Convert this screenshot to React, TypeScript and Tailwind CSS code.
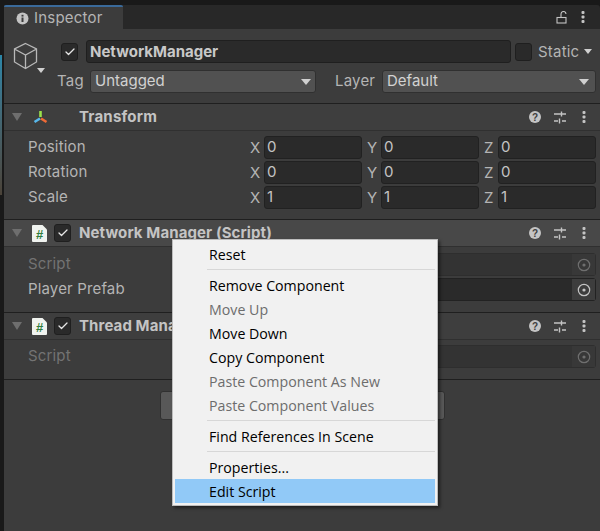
import { Check } from "lucide-react";

const font = "font-['Inter','Noto_Sans',sans-serif]";

function Dots() {
    return (
        <svg width="4" height="14" viewBox="0 0 4 14" className="block">
            <rect x="0.5" y="1" width="3" height="3" rx="1" fill="#c4c4c4" />
            <rect x="0.5" y="5.5" width="3" height="3" rx="1" fill="#c4c4c4" />
            <rect x="0.5" y="10" width="3" height="3" rx="1" fill="#c4c4c4" />
        </svg>
    );
}

function HeaderIcons() {
    return (
        <div className="ml-auto flex items-center">
            <svg width="14" height="14" viewBox="0 0 14 14" className="block">
                <circle cx="7" cy="7" r="6" fill="#c4c4c4" />
                <text x="7" y="10.5" textAnchor="middle" fontSize="10" fontWeight="700" fontFamily="Liberation Sans" fill="#3e3e3e">?</text>
            </svg>
            <svg width="14" height="14" viewBox="0 0 14 14" className="ml-[11px] block">
                <path d="M1 4h12M1 11h4M9 11h4M8.5 1.5v5M6.5 8.5v5" stroke="#c4c4c4" strokeWidth="1.4" fill="none" />
            </svg>
            <div className="mr-[14px] ml-[15px]"><Dots /></div>
        </div>
    );
}

function Foldout() {
    return <div className="mr-[10px] ml-[8px] h-0 w-0 border-x-[5px] border-t-[8px] border-x-transparent border-t-[#6e6e6e]" />;
}

function Toggle({ checked = true }: { checked?: boolean }) {
    return (
        <div className="flex h-[18px] w-[17px] items-center justify-center rounded-[3px] border border-[#1f1f1f] bg-[#2a2a2a]">
            {checked && <Check size={12} strokeWidth={2.6} color="#e6e6e6" />}
        </div>
    );
}

function ScriptIcon() {
    return (
        <svg width="15" height="17" viewBox="0 0 15 17" className="mr-[7px] block">
            <path d="M1 0h9.5L15 4.5V16a1 1 0 0 1-1 1H1a1 1 0 0 1-1-1V1a1 1 0 0 1 1-1Z" fill="#f0f3ef" />
            <text x="7.5" y="14" textAnchor="middle" fontSize="13" fontWeight="700" fontFamily="Liberation Sans" fill="#2f7d3c">#</text>
        </svg>
    );
}

function VecField({ axis, value }: { axis: string; value: string }) {
    return (
        <div className="flex w-[117px] shrink-0 items-center">
            <span className="w-[15px] pl-[1px] text-[15px] leading-none text-[#b4b4b4]">{axis}</span>
            <div className="flex h-[23px] w-[98px] shrink-0 items-center rounded-[3px] border border-[#212121] bg-[#2a2a2a] pl-[2px] text-[15px] text-[#c4c4c4]">
                {value}
            </div>
        </div>
    );
}

function VecRow({ label, value }: { label: string; value: string }) {
    return (
        <div className="flex h-[25px] items-center">
            <div className="w-[245px] shrink-0 pl-[24px] text-[15px] tracking-[0.15px] text-[#b4b4b4]">{label}</div>
            <div className="flex">
                <VecField axis="X" value={value} />
                <VecField axis="Y" value={value} />
                <VecField axis="Z" value={value} />
            </div>
        </div>
    );
}

function ObjectRow({ label, dim }: { label: string; dim?: boolean }) {
    return (
        <div className="flex h-[25px] items-center justify-between pr-[4px]">
            <span className={`pl-[24px] text-[15px] tracking-[0.15px] ${dim ? "text-[#737373]" : "text-[#b4b4b4]"}`}>{label}</span>
            <div className={`flex h-[23px] w-[160px] items-center justify-end rounded-[3px] border ${dim ? "border-[#2e2e2e] bg-[#333333]" : "border-[#222222] bg-[#2a2a2a]"}`}>
                <div className={`flex h-[21px] w-[23px] items-center justify-center ${dim ? "bg-[#383838]" : "bg-[#3d3d3d]"}`}>
                    <svg width="14" height="14" viewBox="0 0 14 14">
                        <circle cx="7" cy="7" r="5.7" fill="none" stroke={dim ? "#6f6f6f" : "#c4c4c4"} strokeWidth="1.2" />
                        <circle cx="7" cy="7" r="1.6" fill={dim ? "#6f6f6f" : "#c4c4c4"} />
                    </svg>
                </div>
            </div>
        </div>
    );
}

function MenuItem({ label, muted, active }: { label: string; muted?: boolean; active?: boolean }) {
    return (
        <div className={`flex h-[24px] items-center pt-[1px] pl-[34px] text-[14.2px] ${active ? "bg-[#91c9f7] text-black" : muted ? "text-[#6d6d6d]" : "text-black"}`}>
            {label}
        </div>
    );
}

function MenuSep() {
    return <div className="my-[3px] ml-[32px] h-px bg-[#d7d7d7]" />;
}

export default function App() {
    return (
        <div className={`relative h-[531px] w-[600px] overflow-hidden bg-[#191919] pt-[5px] pl-[4px] ${font}`}>
            <div className="absolute top-[55px] left-0 h-[140px] w-[1.5px] bg-gradient-to-b from-[#2a86a8] to-[#4a4238]" />

            <div className="flex h-[24px] items-stretch rounded-tr-[3px] bg-[#282828]">
                <div className="flex w-[119px] items-center rounded-t-[2px] border-t-2 border-[#3a6a9a] bg-[#3c3c3c] pl-[12px]">
                    <svg width="13" height="13" viewBox="0 0 13 13" className="block">
                        <circle cx="6.5" cy="6.5" r="6" fill="#c4c4c4" />
                        <rect x="5.5" y="5.5" width="2" height="4.5" fill="#3c3c3c" />
                        <rect x="5.5" y="2.8" width="2" height="1.8" fill="#3c3c3c" />
                    </svg>
                    <span className="ml-[5px] text-[15px] tracking-[0.2px] text-[#b4b4b4]">Inspector</span>
                </div>
                <div className="ml-auto flex items-center">
                    <svg width="12" height="13" viewBox="0 0 12 13" className="block">
                        <path d="M5 6V3a2.5 2.5 0 0 1 5 0" fill="none" stroke="#c4c4c4" strokeWidth="1.1" />
                        <rect x="1" y="6.5" width="9" height="5.5" fill="none" stroke="#c4c4c4" strokeWidth="1.1" />
                    </svg>
                    <div className="mr-[15px] ml-[13px]"><Dots /></div>
                </div>
            </div>

            <div className="h-[502px] bg-[#3c3c3c]">
                <div className="relative h-[75px] border-b border-[#1f1f1f] pt-[11px]">
                    <svg width="25" height="28" viewBox="0 0 25 28" className="absolute top-[13px] left-[9px]">
                        <path d="M12.5 1.5 23.5 7v13l-11 6.5L1.5 20V7ZM1.5 7l11 6 11-6M12.5 13v13.5" fill="none" stroke="#b8b8b8" strokeWidth="1.3" />
                    </svg>
                    <div className="absolute top-[39px] left-[33px] h-0 w-0 border-x-[4.5px] border-t-[5px] border-x-transparent border-t-[#d0d0d0]" />
                    <div className="flex h-[23px] items-center">
                        <div className="ml-[57px]"><Toggle /></div>
                        <div className="ml-[8px] flex h-[23px] w-[425px] items-center rounded-[3px] border border-[#1f1f1f] bg-[#2a2a2a] pt-[1px] pl-[3px] text-[15px] font-bold text-[#c8c8c8]">
                            NetworkManager
                        </div>
                        <div className="ml-[4px]"><Toggle checked={false} /></div>
                        <span className="ml-[6px] pt-[1px] text-[15px] tracking-[0.2px] text-[#b4b4b4]">Static</span>
                        <div className="ml-[5px] h-0 w-0 border-x-[4.5px] border-t-[5px] border-x-transparent border-t-[#d0d0d0]" />
                    </div>
                    <div className="mt-[7px] flex h-[23px] items-center">
                        <span className="ml-[53px] w-[33px] text-[15px] tracking-[0.2px] text-[#b4b4b4]">Tag</span>
                        <div className="flex h-[23px] w-[226px] items-center justify-between rounded-[3px] border border-[#303030] bg-[#515151] pr-[4px] pl-[4px] text-[15px] text-[#d2d2d2]">
                            Untagged
                            <div className="h-0 w-0 border-x-[5px] border-t-[6px] border-x-transparent border-t-[#d0d0d0]" />
                        </div>
                        <span className="ml-[19px] w-[47px] text-[15px] tracking-[0.2px] text-[#b4b4b4]">Layer</span>
                        <div className="flex h-[23px] w-[214px] items-center justify-between rounded-[3px] border border-[#303030] bg-[#515151] pr-[6px] pl-[4px] text-[15px] text-[#d2d2d2]">
                            Default
                            <div className="h-0 w-0 border-x-[5px] border-t-[6px] border-x-transparent border-t-[#d0d0d0]" />
                        </div>
                    </div>
                </div>

                <div className="flex h-[27px] items-center border-b border-[#303030] bg-[#3e3e3e]">
                    <Foldout />
                    <svg width="17" height="17" viewBox="0 0 17 17" className="block">
                        <path d="M8.5 2v6" stroke="#9be34a" strokeWidth="2.6" />
                        <path d="M8 9.5 2.5 13" stroke="#58b8ec" strokeWidth="2.6" />
                        <path d="M9 9.5l5.5 3.5" stroke="#ef6a36" strokeWidth="2.6" />
                    </svg>
                    <span className="ml-[30px] pt-[1px] text-[15px] font-bold tracking-[0.2px] text-[#c4c4c4]">Transform</span>
                    <HeaderIcons />
                </div>
                <div className="h-[89px] border-b border-[#1f1f1f] pt-[4px]">
                    <VecRow label="Position" value="0" />
                    <VecRow label="Rotation" value="0" />
                    <VecRow label="Scale" value="1" />
                </div>

                <div className="flex h-[27px] items-center border-b border-[#303030] bg-[#484848]">
                    <Foldout />
                    <ScriptIcon />
                    <Toggle />
                    <span className="ml-[8px] pt-[1px] text-[15px] font-bold tracking-[0.1px] text-[#c4c4c4]">Network Manager (Script)</span>
                    <HeaderIcons />
                </div>
                <div className="h-[66px] border-b border-[#1f1f1f] pt-[5px]">
                    <ObjectRow label="Script" dim />
                    <ObjectRow label="Player Prefab" />
                </div>

                <div className="flex h-[27px] items-center border-b border-[#303030] bg-[#3e3e3e]">
                    <Foldout />
                    <ScriptIcon />
                    <Toggle />
                    <span className="ml-[8px] text-[15px] font-bold tracking-[0.1px] text-[#c4c4c4]">Thread Manager (Script)</span>
                    <HeaderIcons />
                </div>
                <div className="h-[40px] border-b border-[#1f1f1f] pt-[4px]">
                    <ObjectRow label="Script" dim />
                </div>

                <div className="mt-[11px] ml-[156px] h-[29px] w-[285px] rounded-[3px] border border-[#303030] bg-[#585858]" />
            </div>

            <div className="absolute top-[239px] left-[172px] w-[266px] border border-[#bdbdbd] bg-[#f1f1f1] p-[2px] font-['Open_Sans',sans-serif] shadow-[2px_2px_3px_rgba(0,0,0,0.5)]">
                <MenuItem label="Reset" />
                <MenuSep />
                <MenuItem label="Remove Component" />
                <MenuItem label="Move Up" muted />
                <MenuItem label="Move Down" />
                <MenuItem label="Copy Component" />
                <MenuItem label="Paste Component As New" muted />
                <MenuItem label="Paste Component Values" muted />
                <MenuSep />
                <MenuItem label="Find References In Scene" />
                <MenuSep />
                <MenuItem label="Properties..." />
                <MenuItem label="Edit Script" active />
            </div>
        </div>
    );
}
